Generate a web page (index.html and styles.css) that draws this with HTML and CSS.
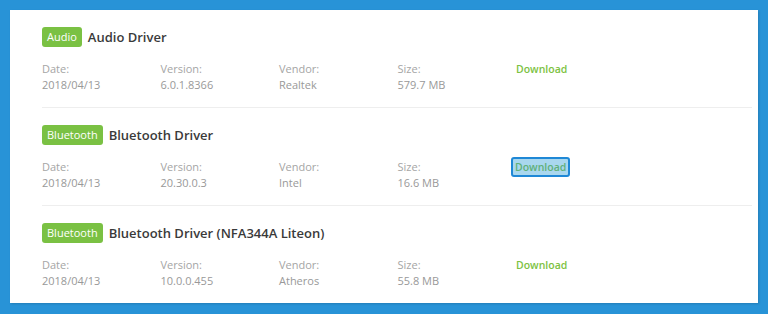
FILE: index.html
```html
<!DOCTYPE html>
<html lang="en">
<head>
  <meta charset="UTF-8" />
  <title>Drivers</title>
  <link rel="stylesheet" href="styles.css">
</head>
<body>
  <div class="panel">
    <div class="driver">
      <div class="driver-head">
        <span class="badge">Audio</span>
        <h3>Audio Driver</h3>
      </div>
      <div class="meta">
        <div class="col"><span class="label">Date:</span><span class="value">2018/04/13</span></div>
        <div class="col"><span class="label">Version:</span><span class="value">6.0.1.8366</span></div>
        <div class="col"><span class="label">Vendor:</span><span class="value">Realtek</span></div>
        <div class="col"><span class="label">Size:</span><span class="value">579.7 MB</span></div>
        <div class="col"><a class="download" href="#">Download</a></div>
      </div>
    </div>
    <div class="driver">
      <div class="driver-head">
        <span class="badge">Bluetooth</span>
        <h3>Bluetooth Driver</h3>
      </div>
      <div class="meta">
        <div class="col"><span class="label">Date:</span><span class="value">2018/04/13</span></div>
        <div class="col"><span class="label">Version:</span><span class="value">20.30.0.3</span></div>
        <div class="col"><span class="label">Vendor:</span><span class="value">Intel</span></div>
        <div class="col"><span class="label">Size:</span><span class="value">16.6 MB</span></div>
        <div class="col"><a class="download focused" href="#">Download</a></div>
      </div>
    </div>
    <div class="driver">
      <div class="driver-head">
        <span class="badge">Bluetooth</span>
        <h3>Bluetooth Driver (NFA344A Liteon)</h3>
      </div>
      <div class="meta">
        <div class="col"><span class="label">Date:</span><span class="value">2018/04/13</span></div>
        <div class="col"><span class="label">Version:</span><span class="value">10.0.0.455</span></div>
        <div class="col"><span class="label">Vendor:</span><span class="value">Atheros</span></div>
        <div class="col"><span class="label">Size:</span><span class="value">55.8 MB</span></div>
        <div class="col"><a class="download" href="#">Download</a></div>
      </div>
    </div>
  </div>
</body>
</html>
```

FILE: styles.css
```css
html, body {
  margin: 0;
  height: 100%;
}
body {
  background: #2893d7;
  padding: 10px 10px 0 10px;
  box-sizing: border-box;
  font-family: "Open Sans", "Noto Sans", sans-serif;
}
.panel {
  background: #fff;
  width: 748px;
  height: 293px;
  padding: 0 6px 0 32px;
  box-sizing: border-box;
  overflow: hidden;
  box-shadow: 1px 1px 2px rgba(0,0,0,0.15);
}
.driver {
  padding: 17px 0 14px;
  border-bottom: 1px solid #eeeeee;
}
.driver-head {
  display: flex;
  align-items: center;
  gap: 6px;
  height: 20px;
}
.badge {
  background: #7ac143;
  color: #fff;
  font-size: 11px;
  line-height: 20px;
  padding: 0 5px;
  border-radius: 3px;
}
.driver-head h3 {
  margin: 0;
  font-size: 13px;
  font-weight: 600;
  color: #3a3a3a;
}
.meta {
  display: flex;
  margin-top: 14px;
}
.col {
  width: 118.5px;
  display: flex;
  flex-direction: column;
  align-items: flex-start;
  font-size: 11px;
  line-height: 16px;
}
.label {
  color: #a5a5a5;
}
.value {
  color: #999;
}
.download {
  color: #7cc242;
  text-decoration: none;
  font-size: 10.5px;
  font-weight: 600;
}
.download.focused {
  color: #5fb07a;
  background: #a9d7ee;
  border: 2px solid #1f88d6;
  border-radius: 3px;
  margin: -2px 0 0 -5px;
  padding: 0 2px;
}
```
